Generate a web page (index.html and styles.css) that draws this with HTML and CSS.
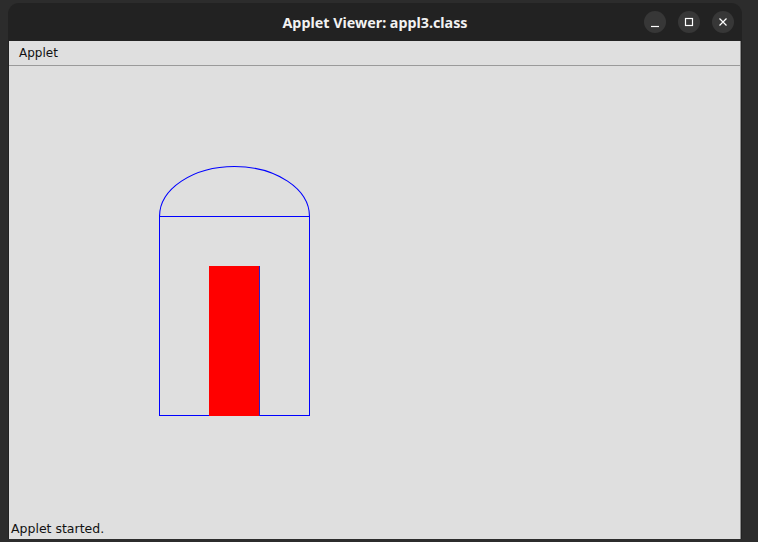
FILE: index.html
```html
<!DOCTYPE html>
<html>
<head>
<meta charset="utf-8">
<link rel="stylesheet" href="styles.css">
</head>
<body>
<div class="window">
  <div class="titlebar">
    <div class="title">Applet Viewer: appl3.class</div>
    <div class="controls">
      <div class="btn"><svg width="22" height="22" viewBox="0 0 22 22"><path d="M7 15.5h8" stroke="#fff" stroke-width="1.2"/></svg></div>
      <div class="btn"><svg width="22" height="22" viewBox="0 0 22 22"><rect x="7.5" y="7.5" width="7" height="7" fill="none" stroke="#fff" stroke-width="1.2"/></svg></div>
      <div class="btn"><svg width="22" height="22" viewBox="0 0 22 22"><path d="M7.5 7.5l7 7M14.5 7.5l-7 7" stroke="#fff" stroke-width="1.2"/></svg></div>
    </div>
  </div>
  <div class="client">
    <div class="menubar"><span class="menu">Applet</span></div>
    <div class="canvas">
      <svg class="drawing" width="731" height="474" viewBox="0 0 731 474">
        <path d="M150.5 150.5 A75 50 0 0 1 300.5 150.5" fill="none" stroke="#0000ff" stroke-width="1.1"/>
        <g shape-rendering="crispEdges" fill="#0000ff">
          <rect x="150" y="150" width="151" height="1"/>
          <rect x="150" y="349" width="151" height="1"/>
          <rect x="150" y="150" width="1" height="200"/>
          <rect x="300" y="150" width="1" height="200"/>
          <rect x="200" y="200" width="50" height="150" fill="#ff0000"/>
          <rect x="250" y="200" width="1" height="150" fill="#2222cc"/>
        </g>
      </svg>
      <div class="status">Applet started.</div>
    </div>
  </div>
</div>
</body>
</html>
```

FILE: styles.css
```css
html, body {
  margin: 0;
  padding: 0;
}
body {
  width: 758px;
  height: 542px;
  background: #2c2c2c;
  overflow: hidden;
}
.window {
  margin: 3px 0 0 8px;
  width: 734px;
  height: 536px;
  background: #222222;
  border-radius: 11px 11px 0 0;
  display: flex;
  flex-direction: column;
}
.titlebar {
  height: 38px;
  flex: none;
  position: relative;
  display: flex;
  align-items: center;
  justify-content: center;
}
.title {
  font-family: "Noto Sans", sans-serif;
  font-weight: bold;
  font-size: 14.3px;
  color: #f2f2f2;
  margin-left: 0;
}
.controls {
  position: absolute;
  right: 8px;
  top: 8px;
  display: flex;
  gap: 12px;
}
.btn {
  width: 22px;
  height: 22px;
  border-radius: 50%;
  background: #373737;
}
.btn svg {
  display: block;
}
.client {
  flex: 1;
  margin-left: 1px;
  width: 731px;
  background: #dfdfdf;
  border-right: 1px solid #8a8a8a;
  display: flex;
  flex-direction: column;
}
.menubar {
  height: 24px;
  border-bottom: 1px solid #9a9a9a;
  display: flex;
  align-items: center;
  padding-left: 10px;
  font-family: "DejaVu Sans", sans-serif;
  font-size: 12px;
  color: #111;
}
.canvas {
  flex: 1;
  position: relative;
}
.drawing {
  position: absolute;
  left: 0;
  top: 0;
}
.status {
  position: absolute;
  left: 2px;
  bottom: 3px;
  font-family: "DejaVu Sans", sans-serif;
  font-size: 12.5px;
  color: #111;
}
```
